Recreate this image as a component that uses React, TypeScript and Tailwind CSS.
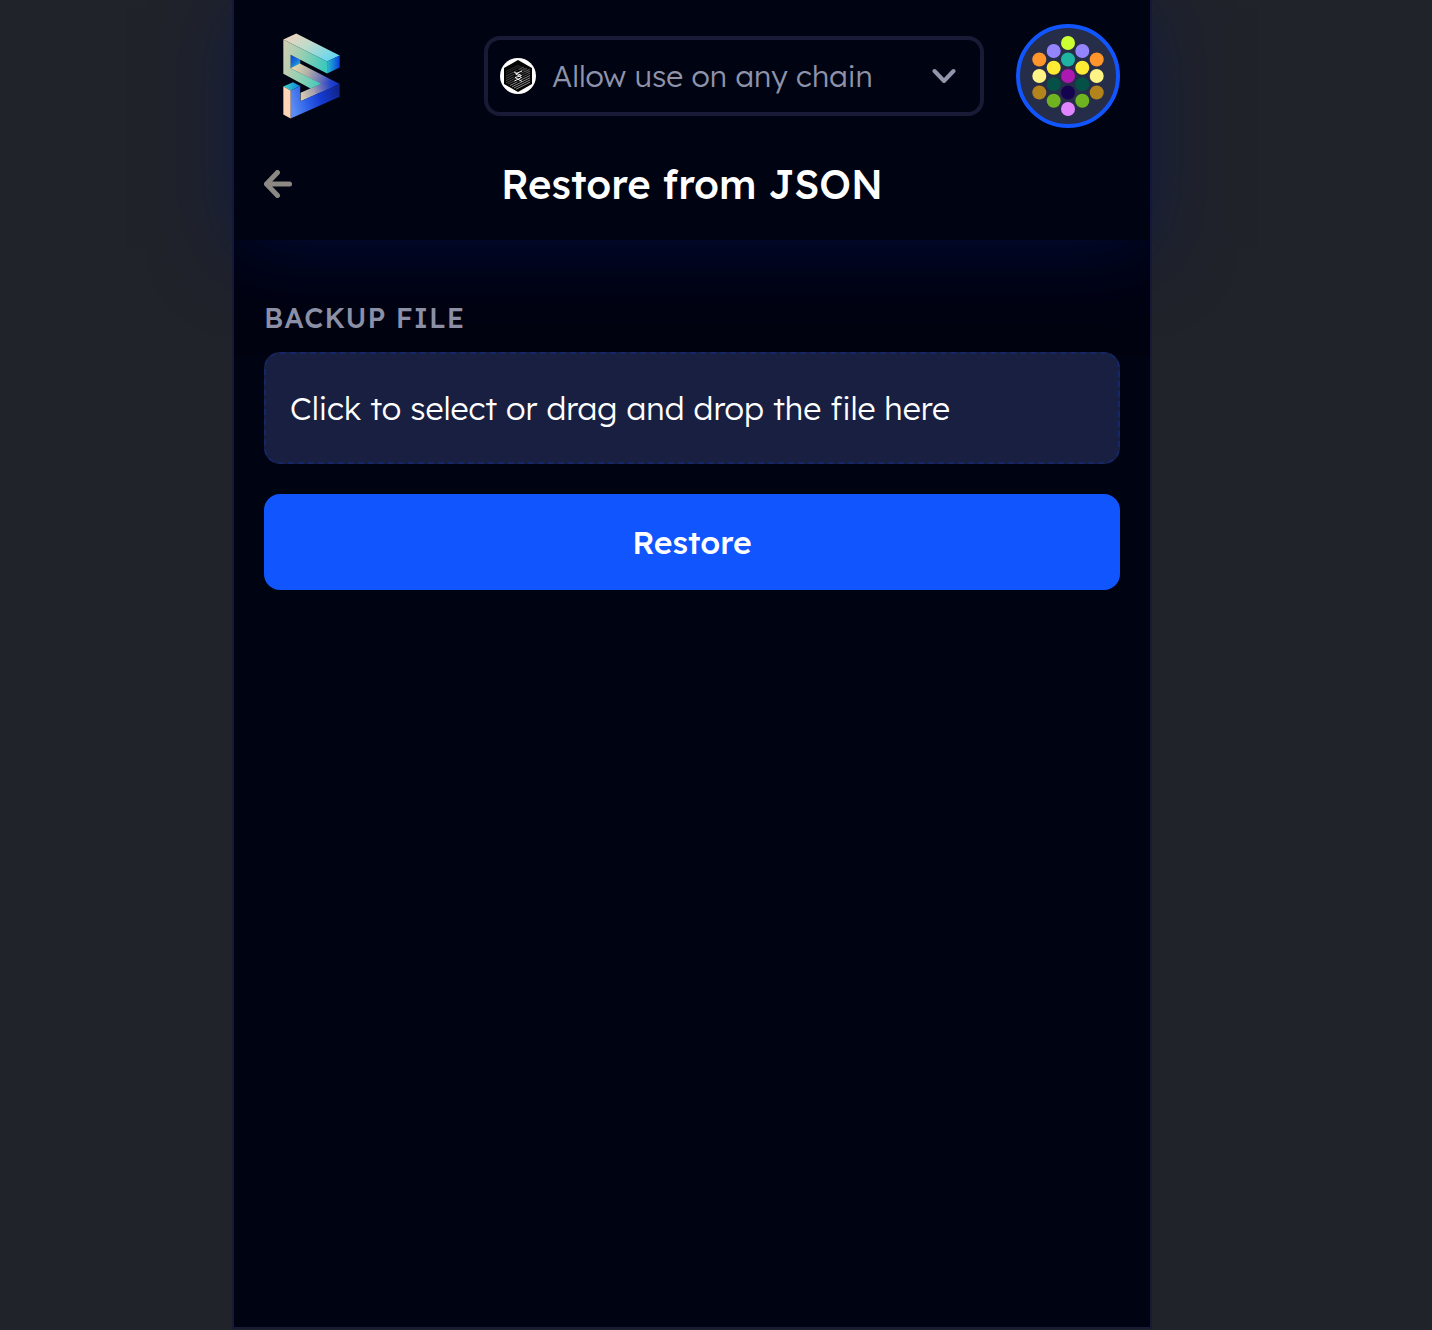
import { useId, useState } from "react";

function SequenceLogo() {
  return (
    <svg viewBox="39 40 172 259" className="h-[86px] w-[57px]" role="img" aria-label="Logo">
      <defs>
        <linearGradient id="lTop" x1="0" y1="0" x2="1" y2="0.7">
          <stop offset="0" stopColor="#f9d3bd" />
          <stop offset="0.5" stopColor="#bcdccb" />
          <stop offset="1" stopColor="#66d6f0" />
        </linearGradient>
        <linearGradient id="lFront" x1="0" y1="0" x2="1" y2="0.2">
          <stop offset="0" stopColor="#d5cdb2" />
          <stop offset="0.5" stopColor="#93cfb2" />
          <stop offset="1" stopColor="#3fc9bd" />
        </linearGradient>
        <linearGradient id="lEnd" x1="0" y1="0" x2="1" y2="0">
          <stop offset="0" stopColor="#2cb9cb" />
          <stop offset="0.5" stopColor="#1680d8" />
          <stop offset="1" stopColor="#0a3fdd" />
        </linearGradient>
        <linearGradient id="lInner" x1="0" y1="0" x2="0.6" y2="1">
          <stop offset="0" stopColor="#0a3fdf" />
          <stop offset="0.6" stopColor="#1673d8" />
          <stop offset="1" stopColor="#2fb6cc" />
        </linearGradient>
        <linearGradient id="lMid" x1="63" y1="145" x2="200" y2="200" gradientUnits="userSpaceOnUse">
          <stop offset="0" stopColor="#eadfae" />
          <stop offset="0.35" stopColor="#b3b0a8" />
          <stop offset="0.65" stopColor="#6a73b8" />
          <stop offset="0.85" stopColor="#2743c8" />
          <stop offset="1" stopColor="#1036cf" />
        </linearGradient>
        <linearGradient id="lReturn" x1="92" y1="235" x2="195" y2="190" gradientUnits="userSpaceOnUse">
          <stop offset="0" stopColor="#ddd0ae" />
          <stop offset="0.4" stopColor="#a29fb0" />
          <stop offset="0.75" stopColor="#4a59bd" stopOpacity="0.8" />
          <stop offset="1" stopColor="#1036cf" stopOpacity="0" />
        </linearGradient>
        <linearGradient id="lBase" x1="0" y1="0.5" x2="1" y2="0.3">
          <stop offset="0" stopColor="#5b8df3" />
          <stop offset="0.3" stopColor="#2f62e8" />
          <stop offset="0.6" stopColor="#143bd2" />
          <stop offset="1" stopColor="#10248c" />
        </linearGradient>
        <linearGradient id="lCap" x1="0" y1="0" x2="1" y2="0">
          <stop offset="0" stopColor="#3fd6c6" />
          <stop offset="1" stopColor="#0b7fe0" />
        </linearGradient>
      </defs>
      <path d="M62 105L91 119V133L62 147Z" fill="url(#lInner)" />
      <path d="M62 146L90 132L210 194L154 220L122 208L153 194Z" fill="url(#lMid)" />
      <path d="M92 220L153 193L210 194L92 246Z" fill="url(#lReturn)" />
      <path d="M40 59L172 126V162L62 105V146L154 193L122 207L40 163Z" fill="url(#lFront)" />
      <path d="M40 59L79 41L210 108L172 126Z" fill="url(#lTop)" />
      <path d="M172 126L210 108V144L172 162Z" fill="url(#lEnd)" />
      <path d="M62 213L91 200V246L210 194V232L62 298Z" fill="url(#lBase)" />
      <path d="M40 201L69 188L91 200L62 213Z" fill="url(#lCap)" />
      <path d="M40 201L62 213V298L40 286Z" fill="#ffd3b5" />
    </svg>
  );
}

function ChainIcon() {
  return (
    <svg viewBox="0 0 36 36" className="size-9 shrink-0" aria-hidden="true">
      <circle cx="18" cy="18" r="18" fill="#fff" />
      <path d="M18 2L32 10V26L18 34L4 26V10Z" fill="#050505" />
      <g stroke="#d0d0d0" strokeWidth="0.7" fill="none">
        <path d="M6 13.500L18 7.500L30 13.500M6 15.500L18 9.500L30 15.500" opacity="0.3" />
        <path d="M6 18L24 9M6 20.300L27 10M6 22.600L30 11M6 24.900L30 13M8 26L30 15.300" opacity="0.5" />
        <path d="M10 27.500L30 17.500M12 28.800L30 19.800M14 30L30 22M16 31.200L30 24.200" opacity="0.9" />
      </g>
      <path d="M18 11L23 18L18 25L13 18Z" fill="#050505" fillOpacity="0.7" />
      <path
        d="M22 13L15.500 15.800L21.500 19.500L14.500 23M14 14L21.500 17.500L15 19.500L22 23.500"
        stroke="#fff"
        strokeWidth="0.9"
        fill="none"
      />
    </svg>
  );
}

const DOTS: [number, number, string][] = [
  [52, 19, "#ccff33"],
  [37.7, 27, "#9485ff"],
  [66.3, 27, "#9485ff"],
  [23.3, 35.5, "#ff952b"],
  [52, 35.5, "#1fb3a2"],
  [80.7, 35.5, "#ff952b"],
  [37.7, 43.7, "#ffeb33"],
  [66.3, 43.7, "#ffeb33"],
  [23.3, 52, "#fff385"],
  [52, 52, "#ad18b0"],
  [80.7, 52, "#fff385"],
  [37.7, 60.3, "#055047"],
  [66.3, 60.3, "#055047"],
  [23.3, 68.5, "#b3841c"],
  [52, 68.5, "#15034f"],
  [80.7, 68.5, "#b3841c"],
  [37.7, 76.7, "#6fb321"],
  [66.3, 76.7, "#6fb321"],
  [52, 85, "#e085ff"],
];

function Avatar() {
  return (
    <svg viewBox="0 0 104 104" className="size-[104px]" aria-hidden="true">
      <circle cx="52" cy="52" r="50" fill="#262d49" stroke="#1155ff" strokeWidth="4" />
      {DOTS.map(([x, y, color]) => (
        <circle key={`${x}-${y}`} cx={x} cy={y} r="7" fill={color} />
      ))}
    </svg>
  );
}

export default function App() {
  const fileId = useId();
  const [fileName, setFileName] = useState("");

  return (
    <div className="flex min-h-screen justify-center bg-[#20232a] pr-12 pb-px font-['Lexend','Inter',sans-serif] text-white">
      <div className="w-full max-w-[920px] border-2 border-t-0 border-[#191a36] bg-[#000311]">
        <header className="bg-[#000311] px-[30px] py-6 pb-[30px] shadow-[0_8px_72px_rgba(4,18,90,0.5)]">
          <div className="flex items-center gap-8">
            <a href="#home" className="ml-[19px]">
              <SequenceLogo />
            </a>
            <div className="relative ml-auto flex h-20 w-[500px] items-center rounded-2xl border-4 border-[#191a36] pl-3">
              <ChainIcon />
              <select
                aria-label="Chain"
                className="h-full flex-1 appearance-none bg-transparent pl-4 text-[30px] font-light text-[#8e93ab] outline-none"
              >
                <option>Allow use on any chain</option>
              </select>
              <svg
                viewBox="0 0 24 16"
                className="pointer-events-none absolute right-6 h-4 w-6"
                fill="none"
                stroke="#9296ad"
                strokeWidth="4"
                strokeLinecap="round"
                strokeLinejoin="round"
                aria-hidden="true"
              >
                <path d="M2.500 3L12 13L21.500 3" />
              </svg>
            </div>
            <button type="button" aria-label="Account" className="rounded-full">
              <Avatar />
            </button>
          </div>
          <div className="mt-[30px] grid grid-cols-[28px_1fr_28px] items-center">
            <button type="button" aria-label="Back">
              <svg
                viewBox="0 0 28 28"
                className="size-7"
                fill="none"
                stroke="#8c8984"
                strokeWidth="5"
                strokeLinecap="round"
                strokeLinejoin="round"
                aria-hidden="true"
              >
                <path d="M13.500 2.500L2.500 14L13.500 25.500" />
                <path d="M3 14H25.500" />
              </svg>
            </button>
            <h1 className="text-center text-[40px] leading-[52px] font-medium">Restore from JSON</h1>
          </div>
        </header>

        <main className="px-[30px] pt-16">
          <form onSubmit={(event) => event.preventDefault()}>
            <h2 className="text-[28px] leading-7 font-medium tracking-[1px] text-[#8b90a6]">BACKUP FILE</h2>
            <label
              htmlFor={fileId}
              className="relative mt-5 flex h-28 cursor-pointer items-center rounded-2xl border-2 border-dashed border-[#152769] bg-[#191f41] px-6 text-[32px] font-light"
            >
              {fileName || "Click to select or drag and drop the file here"}
              <input
                id={fileId}
                type="file"
                accept="application/json"
                className="sr-only"
                onChange={(event) => setFileName(event.target.files?.[0]?.name ?? "")}
              />
            </label>
            <button
              type="submit"
              className="mt-[30px] h-24 w-full rounded-2xl bg-[#1155ff] text-[32px] font-medium"
            >
              Restore
            </button>
          </form>
        </main>
      </div>
    </div>
  );
}
